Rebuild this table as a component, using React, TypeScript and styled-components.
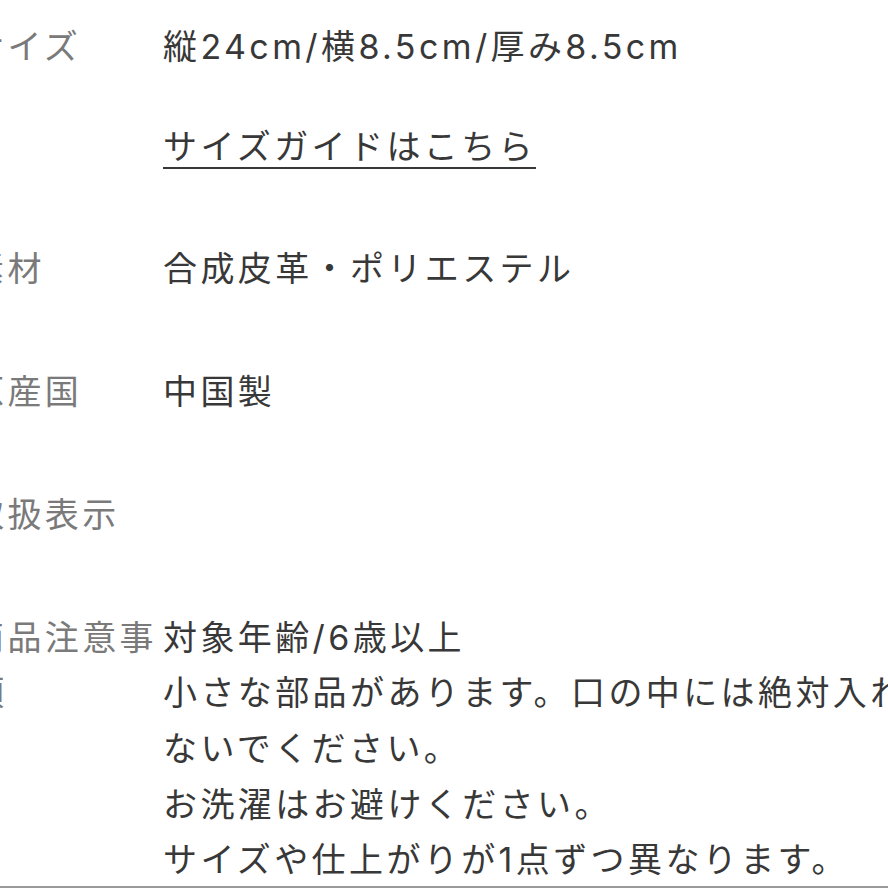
import React from "react";
import styled, { createGlobalStyle } from "styled-components";

const Global = createGlobalStyle`
  html, body { margin: 0; padding: 0; background: #fff; }
  body { overflow: hidden; }
`;

const Page = styled.div`
  width: 888px;
  height: 888px;
  overflow: hidden;
  box-sizing: border-box;
  border-bottom: 2px solid #9a9a9a;
  font-family: "Inter", "Noto Sans CJK JP", "Noto Sans", sans-serif;
`;

const Table = styled.dl`
  margin: 19px 0 0 -30px;
  width: 1000px;
  display: flex;
  flex-direction: column;
  gap: 67px;
`;

const Row = styled.div`
  display: grid;
  grid-template-columns: 190px 775px;
  column-gap: 3px;
  font-size: 34px;
  line-height: 55.7px;
  letter-spacing: 3.4px;
`;

const Label = styled.dt`
  margin: 0;
  color: #7a7a7a;
`;

const Value = styled.dd`
  margin: 0;
  color: #383838;
`;

const Note = styled.p<{ $gap?: number }>`
  margin: ${(p) => p.$gap ?? 0}px 0 0;
`;

const Link = styled.a`
  color: #383838;
  text-decoration: underline;
  text-underline-offset: 8px;
  text-decoration-thickness: 2px;
`;

export default function App() {
  return (
    <>
      <Global />
      <Page>
        <Table>
          <Row>
            <Label>サイズ</Label>
            <Value>
              <Note>縦24cm/横8.5cm/厚み8.5cm</Note>
              <Note $gap={44}>
                <Link href="#">サイズガイドはこちら</Link>
              </Note>
            </Value>
          </Row>
          <Row>
            <Label>素材</Label>
            <Value>合成皮革・ポリエステル</Value>
          </Row>
          <Row>
            <Label>原産国</Label>
            <Value>中国製</Value>
          </Row>
          <Row>
            <Label>取扱表示</Label>
            <Value />
          </Row>
          <Row>
            <Label>商品注意事項</Label>
            <Value>
              対象年齢/6歳以上
              <br />
              小さな部品があります。口の中には絶対入れないでください。
              <br />
              お洗濯はお避けください。
              <br />
              サイズや仕上がりが1点ずつ異なります。
            </Value>
          </Row>
        </Table>
      </Page>
    </>
  );
}
